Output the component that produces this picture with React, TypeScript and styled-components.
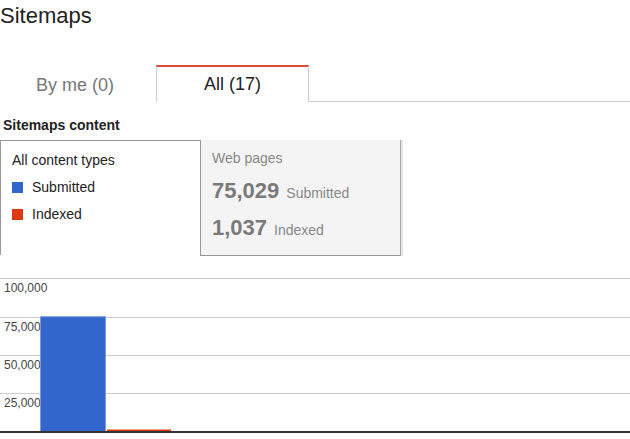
import React from "react";
import styled, { createGlobalStyle } from "styled-components";

const GlobalStyle = createGlobalStyle`
  body {
    margin: 0;
    background: #ffffff;
    font-family: "Liberation Sans", Arial, sans-serif;
    color: #222222;
  }
`;

const Page = styled.div`
  width: 630px;
  height: 439px;
  overflow: hidden;
`;

const Title = styled.h1`
  margin: 0;
  padding-top: 3px;
  font-size: 22px;
  line-height: 26px;
  font-weight: normal;
  color: #222222;
`;

const TabBar = styled.div`
  display: flex;
  margin-top: 36px;
  height: 36px;
  border-bottom: 1px solid #cccccc;
`;

const Tab = styled.div<{ $active?: boolean }>`
  box-sizing: border-box;
  display: flex;
  align-items: center;
  justify-content: center;
  width: ${(p) => (p.$active ? "153px" : "156px")};
  height: 37px;
  padding-top: ${(p) => (p.$active ? "0" : "2px")};
  padding-right: ${(p) => (p.$active ? "0" : "6px")};
  font-size: 18px;
  color: ${(p) => (p.$active ? "#222222" : "#777777")};
  background: #ffffff;
  border-top: 2px solid ${(p) => (p.$active ? "#dd4b39" : "transparent")};
  border-left: 1px solid ${(p) => (p.$active ? "#cccccc" : "transparent")};
  border-right: 1px solid ${(p) => (p.$active ? "#cccccc" : "transparent")};
  position: relative;
  z-index: 1;
`;

const SectionLabel = styled.div`
  margin: 15px 0 0 3px;
  font-size: 14px;
  line-height: 17px;
  font-weight: bold;
  color: #222222;
`;

const Panels = styled.div`
  display: flex;
  margin-top: 6px;
  height: 116px;
`;

const LegendBox = styled.div`
  box-sizing: border-box;
  width: 200px;
  padding: 11px 0 0 11px;
  border-top: 1px solid #999999;
  border-left: 1px solid #999999;
  height: 115px;
`;

const LegendTitle = styled.div`
  font-size: 14px;
  line-height: 17px;
  color: #222222;
  margin-bottom: 10px;
`;

const LegendRow = styled.div`
  display: flex;
  align-items: center;
  gap: 9px;
  font-size: 14px;
  line-height: 17px;
  color: #222222;
  margin-bottom: 10px;
`;

const Swatch = styled.span<{ $color: string }>`
  width: 11px;
  height: 11px;
  background: ${(p) => p.$color};
`;

const StatsBox = styled.div`
  box-sizing: border-box;
  width: 201px;
  height: 116px;
  padding: 10px 0 0 11px;
  background: #f4f4f4;
  border-left: 1px solid #999999;
  border-right: 1px solid #aaaaaa;
  border-bottom: 1px solid #999999;
  box-shadow: 2px 0 0 #e4e4e4;
`;

const StatsTitle = styled.div`
  font-size: 14px;
  line-height: 17px;
  color: #888888;
  margin-bottom: 11px;
`;

const StatRow = styled.div`
  display: flex;
  align-items: baseline;
  gap: 7px;
  height: 37px;
`;

const StatNumber = styled.span`
  font-size: 22px;
  line-height: 26px;
  font-weight: bold;
  color: #7a7a7a;
`;

const StatLabel = styled.span`
  font-size: 14px;
  color: #888888;
`;

const ChartWrap = styled.div`
  margin-top: 22px;
`;

const gridYs = [0, 39, 77, 115];
const labels = ["100,000", "75,000", "50,000", "25,000"];

const Chart = () => {
  const base = 153;
  const scale = 153 / 100000;
  const submitted = 75029;
  const indexed = 1037;
  const hS = submitted * scale;
  const hI = Math.max(1.5, indexed * scale * 0.9);
  return (
    <svg width="630" height="161" viewBox="0 0 630 161">
      {gridYs.map((y) => (
        <rect key={y} x="0" y={y} width="630" height="1" fill="#cccccc" />
      ))}
      {gridYs.map((y, i) => (
        <text
          key={labels[i]}
          x="4"
          y={y + 14}
          fontSize="12"
          fill="#444444"
          fontFamily="Liberation Sans, Arial, sans-serif"
        >
          {labels[i]}
        </text>
      ))}
      <rect
        x="40.5"
        y={base - hS + 0.5}
        width="65"
        height={hS}
        fill="#3366cc"
        stroke="#7b9be0"
        strokeWidth="1"
      />
      <rect x="107" y={base - hI} width="64" height={hI} fill="#dc3912" />
      <rect x="0" y={base} width="630" height="2" fill="#333333" />
    </svg>
  );
};

const App = () => {
  return (
    <Page>
      <GlobalStyle />
      <Title>Sitemaps</Title>
      <TabBar>
        <Tab>By me (0)</Tab>
        <Tab $active>All (17)</Tab>
      </TabBar>
      <SectionLabel>Sitemaps content</SectionLabel>
      <Panels>
        <LegendBox>
          <LegendTitle>All content types</LegendTitle>
          <LegendRow>
            <Swatch $color="#3366cc" />
            Submitted
          </LegendRow>
          <LegendRow>
            <Swatch $color="#dc3912" />
            Indexed
          </LegendRow>
        </LegendBox>
        <StatsBox>
          <StatsTitle>Web pages</StatsTitle>
          <StatRow>
            <StatNumber>75,029</StatNumber>
            <StatLabel>Submitted</StatLabel>
          </StatRow>
          <StatRow>
            <StatNumber>1,037</StatNumber>
            <StatLabel>Indexed</StatLabel>
          </StatRow>
        </StatsBox>
      </Panels>
      <ChartWrap>
        <Chart />
      </ChartWrap>
    </Page>
  );
};

export default App;
